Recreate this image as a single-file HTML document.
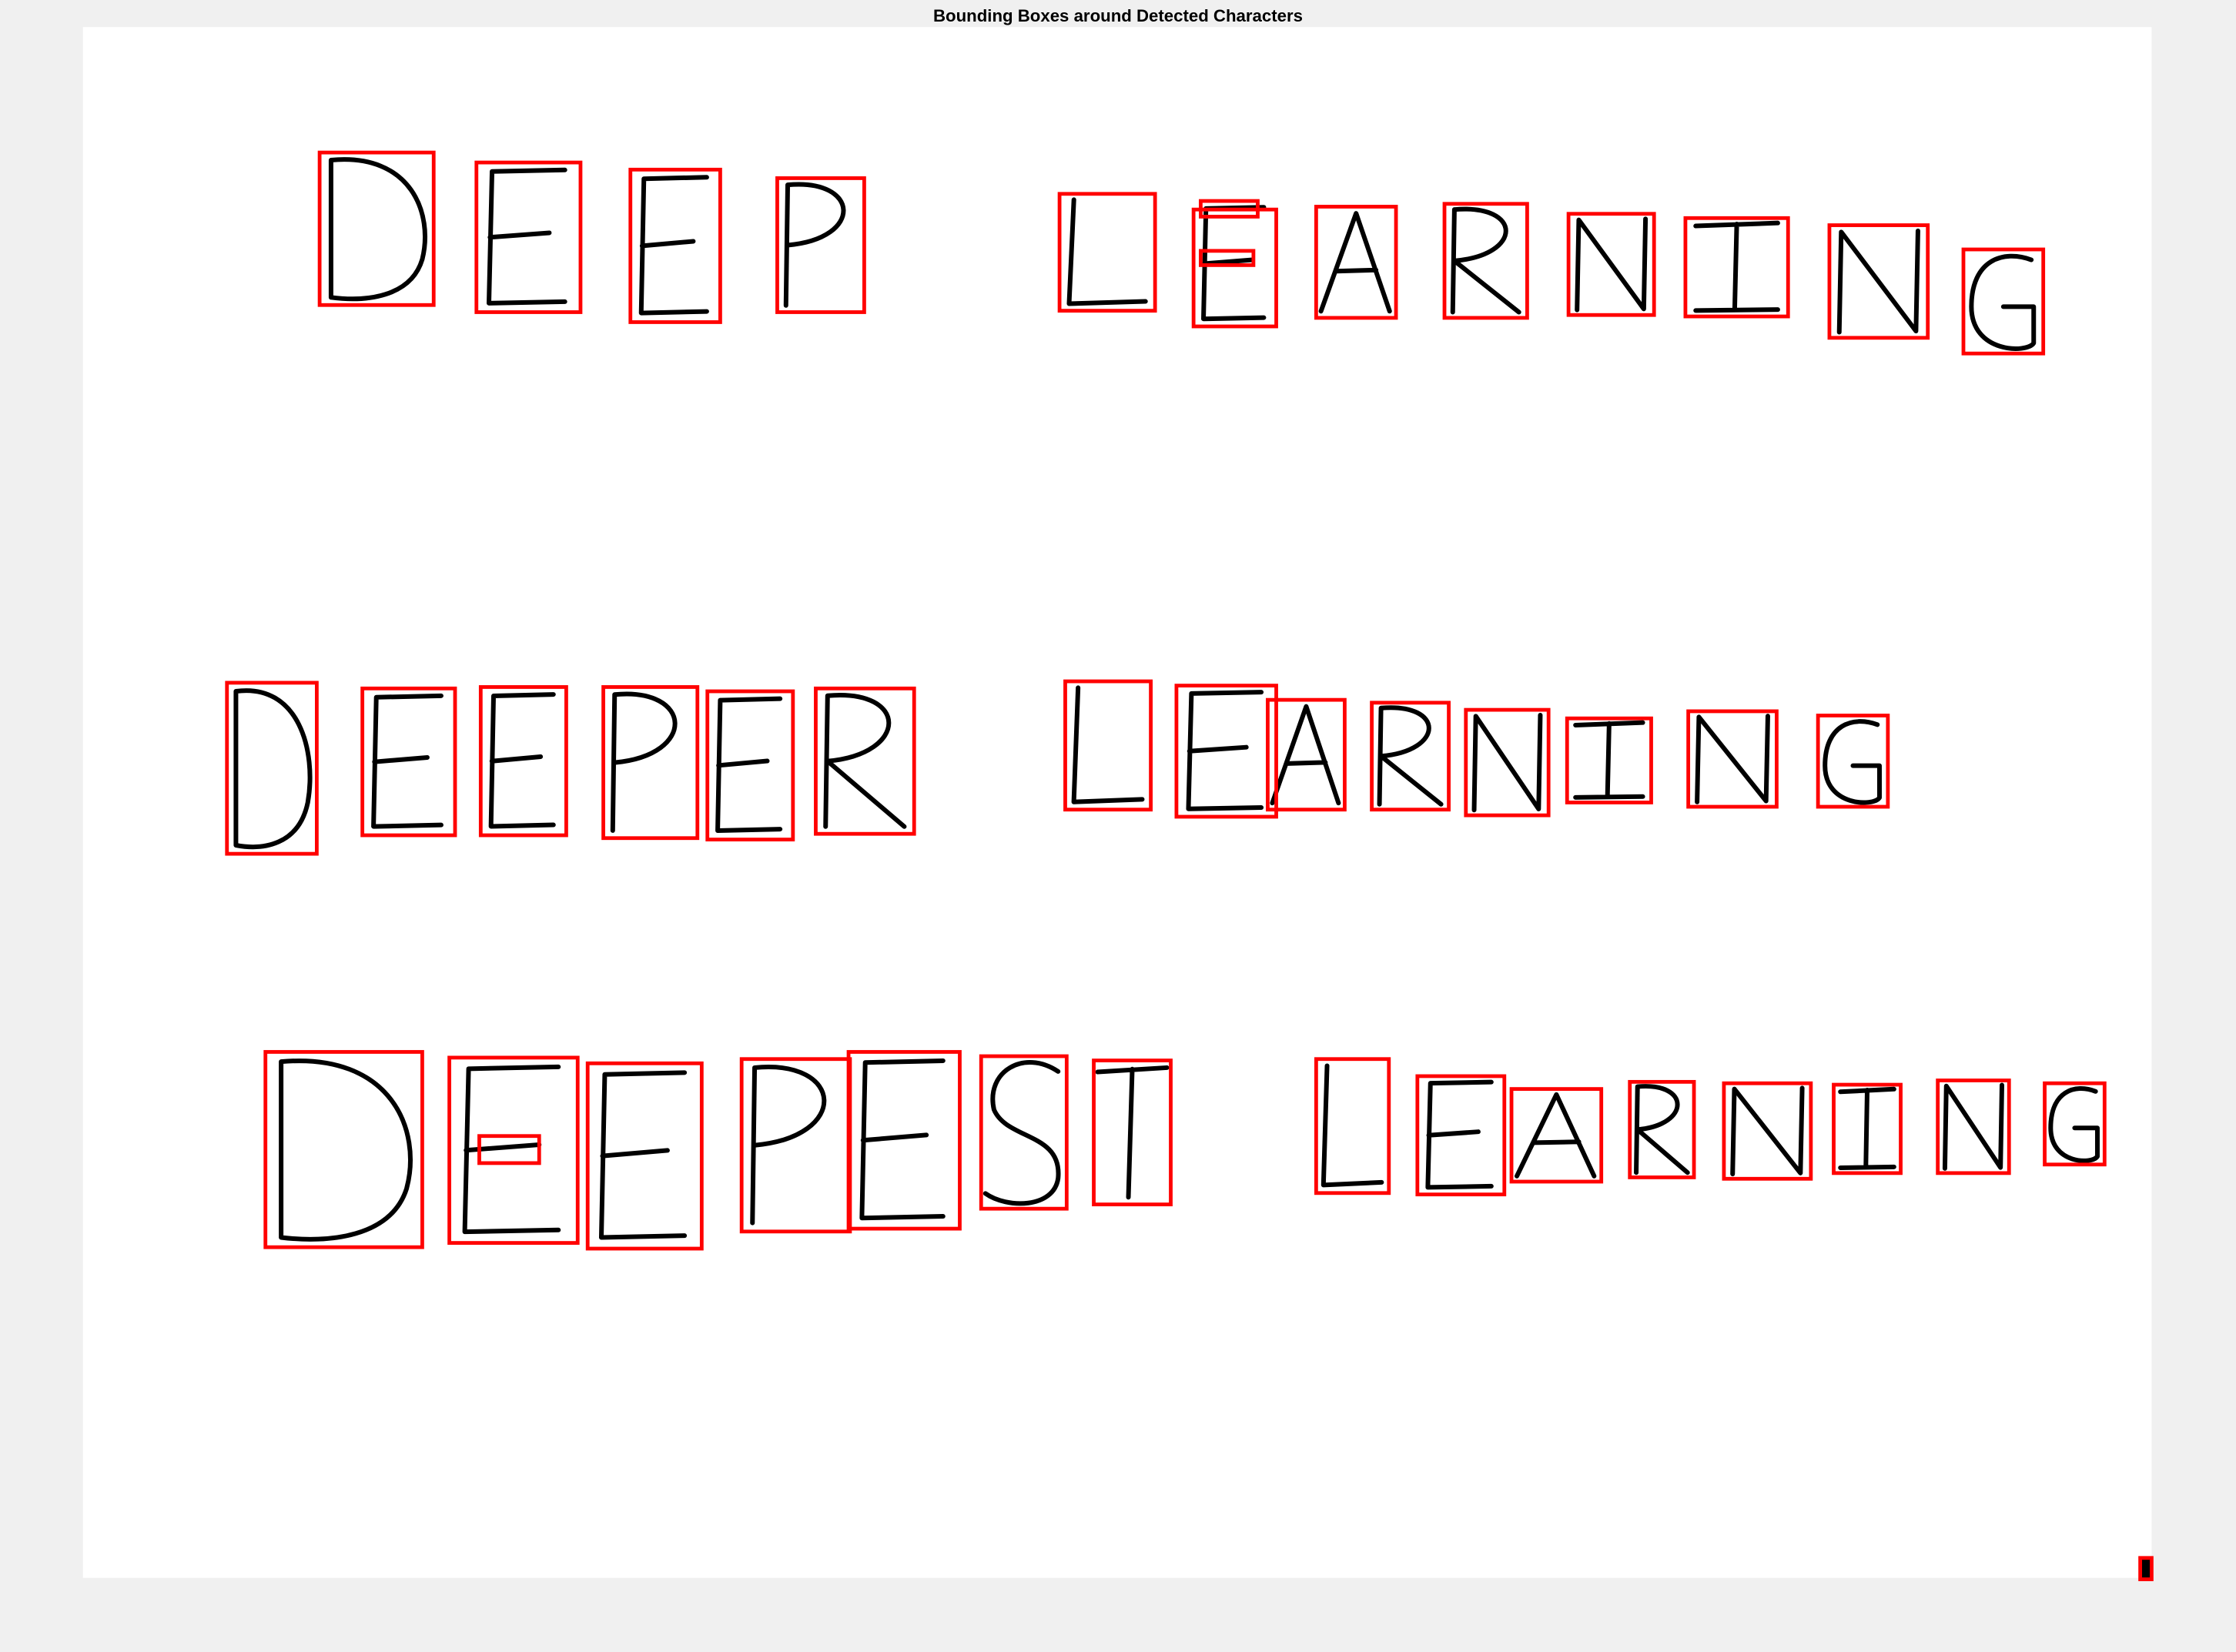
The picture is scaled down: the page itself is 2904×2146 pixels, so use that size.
<!DOCTYPE html>
<html><head><meta charset="utf-8"><style>
html,body{margin:0;padding:0;background:#f0f0f0;}
svg{display:block;}
</style></head><body>
<svg width="2904" height="2146" viewBox="0 0 1568 1159" xmlns="http://www.w3.org/2000/svg">
<defs>
<symbol id="D" viewBox="0 0 100 100" preserveAspectRatio="none"><path vector-effect="non-scaling-stroke" d="M10 5 L10 95 M10 5 C80 0 100 40 90 70 C80 95 40 98 10 95"/></symbol>
<symbol id="E" viewBox="0 0 100 100" preserveAspectRatio="none"><path vector-effect="non-scaling-stroke" d="M15 6 L12 94 L85 93 M15 6 L85 5 M13 50 L70 47"/></symbol>
<symbol id="P" viewBox="0 0 100 100" preserveAspectRatio="none"><path vector-effect="non-scaling-stroke" d="M12 5 L10 95 M12 5 C95 0 100 45 12 50"/></symbol>
<symbol id="L" viewBox="0 0 100 100" preserveAspectRatio="none"><path vector-effect="non-scaling-stroke" d="M15 5 L10 94 L90 92"/></symbol>
<symbol id="A" viewBox="0 0 100 100" preserveAspectRatio="none"><path vector-effect="non-scaling-stroke" d="M6 94 L50 6 L92 94 M25 58 L75 57"/></symbol>
<symbol id="R" viewBox="0 0 100 100" preserveAspectRatio="none"><path vector-effect="non-scaling-stroke" d="M12 5 L10 95 M12 5 C95 0 95 45 12 50 L90 95"/></symbol>
<symbol id="N" viewBox="0 0 100 100" preserveAspectRatio="none"><path vector-effect="non-scaling-stroke" d="M10 95 L12 6 L88 94 L90 5"/></symbol>
<symbol id="I" viewBox="0 0 100 100" preserveAspectRatio="none"><path vector-effect="non-scaling-stroke" d="M10 8 L90 5 M50 6 L48 93 M10 94 L90 93"/></symbol>
<symbol id="G" viewBox="0 0 100 100" preserveAspectRatio="none"><path vector-effect="non-scaling-stroke" d="M85 10 C50 0 10 10 10 55 C10 100 80 100 88 90 L88 55 L50 55"/></symbol>
<symbol id="S" viewBox="0 0 100 100" preserveAspectRatio="none"><path vector-effect="non-scaling-stroke" d="M90 10 C50 -5 5 10 15 35 C30 55 95 50 90 80 C85 100 30 100 5 90"/></symbol>
<symbol id="T" viewBox="0 0 100 100" preserveAspectRatio="none"><path vector-effect="non-scaling-stroke" d="M5 8 L95 5 M50 6 L45 95"/></symbol>
</defs>
<rect x="58" y="19" width="1451" height="1088" fill="#fff"/>
<text x="784" y="15" font-family="Liberation Sans, sans-serif" font-weight="bold" font-size="12" text-anchor="middle" fill="#000">Bounding Boxes around Detected Characters</text>
<g fill="none" stroke="#000" stroke-width="6" stroke-linecap="round" stroke-linejoin="round">
<use href="#D" x="224" y="107" width="80" height="107"/>
<use href="#E" x="334" y="114" width="73" height="105"/>
<use href="#E" x="442" y="119" width="63" height="107"/>
<use href="#P" x="545" y="125" width="61" height="94"/>
<use href="#L" x="743" y="136" width="67" height="82"/>
<use href="#E" x="837" y="141" width="58" height="88"/>
<use href="#A" x="923" y="145" width="56" height="78"/>
<use href="#R" x="1013" y="143" width="58" height="80"/>
<use href="#N" x="1100" y="150" width="60" height="71"/>
<use href="#I" x="1182" y="153" width="72" height="69"/>
<use href="#N" x="1283" y="158" width="69" height="79"/>
<use href="#G" x="1377" y="175" width="56" height="73"/>
<use href="#D" x="159" y="479" width="63" height="120"/>
<use href="#E" x="254" y="483" width="65" height="103"/>
<use href="#E" x="337" y="482" width="60" height="104"/>
<use href="#P" x="423" y="482" width="66" height="106"/>
<use href="#E" x="496" y="485" width="60" height="104"/>
<use href="#R" x="572" y="483" width="69" height="102"/>
<use href="#L" x="747" y="478" width="60" height="90"/>
<use href="#E" x="825" y="481" width="70" height="92"/>
<use href="#A" x="889" y="491" width="54" height="77"/>
<use href="#R" x="962" y="493" width="54" height="75"/>
<use href="#N" x="1028" y="498" width="58" height="74"/>
<use href="#I" x="1099" y="504" width="59" height="59"/>
<use href="#N" x="1184" y="499" width="62" height="67"/>
<use href="#G" x="1275" y="502" width="49" height="64"/>
<use href="#D" x="186" y="738" width="110" height="137"/>
<use href="#E" x="315" y="742" width="90" height="130"/>
<use href="#E" x="412" y="746" width="80" height="130"/>
<use href="#P" x="520" y="743" width="76" height="121"/>
<use href="#E" x="595" y="738" width="78" height="124"/>
<use href="#S" x="688" y="741" width="60" height="107"/>
<use href="#T" x="767" y="744" width="54" height="101"/>
<use href="#L" x="923" y="743" width="51" height="94"/>
<use href="#E" x="994" y="755" width="61" height="83"/>
<use href="#A" x="1060" y="764" width="63" height="65"/>
<use href="#R" x="1143" y="759" width="45" height="67"/>
<use href="#N" x="1209" y="760" width="61" height="67"/>
<use href="#I" x="1286" y="761" width="47" height="62"/>
<use href="#N" x="1359" y="758" width="50" height="65"/>
<use href="#G" x="1434" y="760" width="42" height="57"/>
</g>
<g fill="none" stroke="#ff0000" stroke-width="2.6">
<rect x="224" y="107" width="80" height="107"/>
<rect x="334" y="114" width="73" height="105"/>
<rect x="442" y="119" width="63" height="107"/>
<rect x="545" y="125" width="61" height="94"/>
<rect x="743" y="136" width="67" height="82"/>
<rect x="842" y="141" width="40" height="11"/>
<rect x="837" y="147" width="58" height="82"/>
<rect x="842" y="176" width="37" height="10"/>
<rect x="923" y="145" width="56" height="78"/>
<rect x="1013" y="143" width="58" height="80"/>
<rect x="1100" y="150" width="60" height="71"/>
<rect x="1182" y="153" width="72" height="69"/>
<rect x="1283" y="158" width="69" height="79"/>
<rect x="1377" y="175" width="56" height="73"/>
<rect x="159" y="479" width="63" height="120"/>
<rect x="254" y="483" width="65" height="103"/>
<rect x="337" y="482" width="60" height="104"/>
<rect x="423" y="482" width="66" height="106"/>
<rect x="496" y="485" width="60" height="104"/>
<rect x="572" y="483" width="69" height="102"/>
<rect x="747" y="478" width="60" height="90"/>
<rect x="825" y="481" width="70" height="92"/>
<rect x="889" y="491" width="54" height="77"/>
<rect x="962" y="493" width="54" height="75"/>
<rect x="1028" y="498" width="58" height="74"/>
<rect x="1099" y="504" width="59" height="59"/>
<rect x="1184" y="499" width="62" height="67"/>
<rect x="1275" y="502" width="49" height="64"/>
<rect x="186" y="738" width="110" height="137"/>
<rect x="315" y="742" width="90" height="130"/>
<rect x="336" y="797" width="42" height="19"/>
<rect x="412" y="746" width="80" height="130"/>
<rect x="520" y="743" width="76" height="121"/>
<rect x="595" y="738" width="78" height="124"/>
<rect x="688" y="741" width="60" height="107"/>
<rect x="767" y="744" width="54" height="101"/>
<rect x="923" y="743" width="51" height="94"/>
<rect x="994" y="755" width="61" height="83"/>
<rect x="1060" y="764" width="63" height="65"/>
<rect x="1143" y="759" width="45" height="67"/>
<rect x="1209" y="760" width="61" height="67"/>
<rect x="1286" y="761" width="47" height="62"/>
<rect x="1359" y="758" width="50" height="65"/>
<rect x="1434" y="760" width="42" height="57"/>
<rect x="1501" y="1093" width="8" height="15" fill="#000"/>
</g>
</svg>
</body></html>
